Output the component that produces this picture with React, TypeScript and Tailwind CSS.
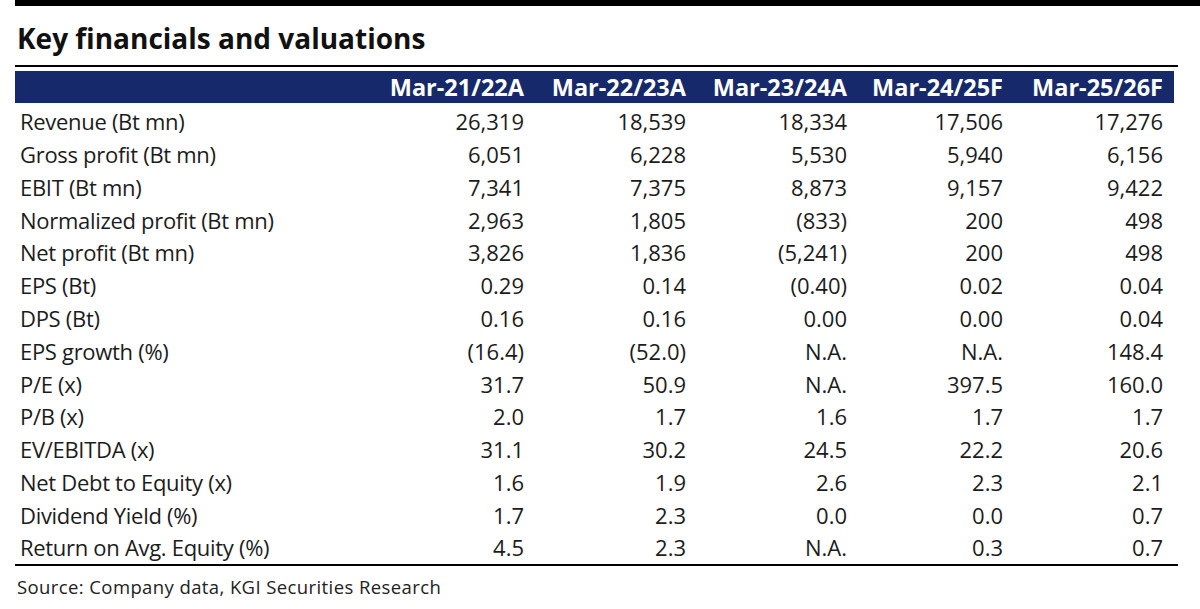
import React from "react";

const years = ["Mar-21/22A", "Mar-22/23A", "Mar-23/24A", "Mar-24/25F", "Mar-25/26F"];

const rows: [string, string[]][] = [
  ["Revenue (Bt mn)", ["26,319", "18,539", "18,334", "17,506", "17,276"]],
  ["Gross profit (Bt mn)", ["6,051", "6,228", "5,530", "5,940", "6,156"]],
  ["EBIT (Bt mn)", ["7,341", "7,375", "8,873", "9,157", "9,422"]],
  ["Normalized profit (Bt mn)", ["2,963", "1,805", "(833)", "200", "498"]],
  ["Net profit (Bt mn)", ["3,826", "1,836", "(5,241)", "200", "498"]],
  ["EPS (Bt)", ["0.29", "0.14", "(0.40)", "0.02", "0.04"]],
  ["DPS (Bt)", ["0.16", "0.16", "0.00", "0.00", "0.04"]],
  ["EPS growth (%)", ["(16.4)", "(52.0)", "N.A.", "N.A.", "148.4"]],
  ["P/E (x)", ["31.7", "50.9", "N.A.", "397.5", "160.0"]],
  ["P/B (x)", ["2.0", "1.7", "1.6", "1.7", "1.7"]],
  ["EV/EBITDA (x)", ["31.1", "30.2", "24.5", "22.2", "20.6"]],
  ["Net Debt to Equity (x)", ["1.6", "1.9", "2.6", "2.3", "2.1"]],
  ["Dividend Yield (%)", ["1.7", "2.3", "0.0", "0.0", "0.7"]],
  ["Return on Avg. Equity (%)", ["4.5", "2.3", "N.A.", "0.3", "0.7"]],
];

const grid = "grid grid-cols-[359px_160px_162px_161px_156px_160px]";

export default function App() {
  return (
    <div
      className="w-[1200px] h-[609px] bg-white overflow-hidden"
      style={{ fontFamily: '"Open Sans", "Noto Sans", sans-serif' }}
    >
      <div className="ml-[15px] h-[6px] bg-black" />
      <div className="ml-[15px] w-[1163px]">
        <h2 className="pl-[2px] pt-[12px] h-[59px] text-[28px] leading-[40px] font-bold text-[#111]">
          Key financials and valuations
        </h2>
        <div className="h-[2px] bg-black" />
        <div className={`${grid} mt-[4px] w-[1159px] h-[32px] items-center bg-[#15296b] text-white text-[23.5px] font-bold`}>
          <div />
          {years.map((y) => (
            <div key={y} className="text-right pr-[10px] leading-[32px]">
              {y}
            </div>
          ))}
        </div>
        <div className="pt-[2px] text-[22px] text-[#1c1c1c]">
          {rows.map(([label, vals]) => (
            <div key={label} className={`${grid} h-[32.77px] items-center`}>
              <div className="pl-[5px] leading-[32px] tracking-[-0.3px]">{label}</div>
              {vals.map((v, i) => (
                <div key={i} className="text-right pr-[10px] leading-[32px]">
                  {v}
                </div>
              ))}
            </div>
          ))}
        </div>
        <div className="h-[2px] bg-black" />
        <p className="pl-[2px] pt-[8px] text-[18.5px] leading-[26px] tracking-[0.4px] text-[#222]">
          Source: Company data, KGI Securities Research
        </p>
      </div>
    </div>
  );
}
